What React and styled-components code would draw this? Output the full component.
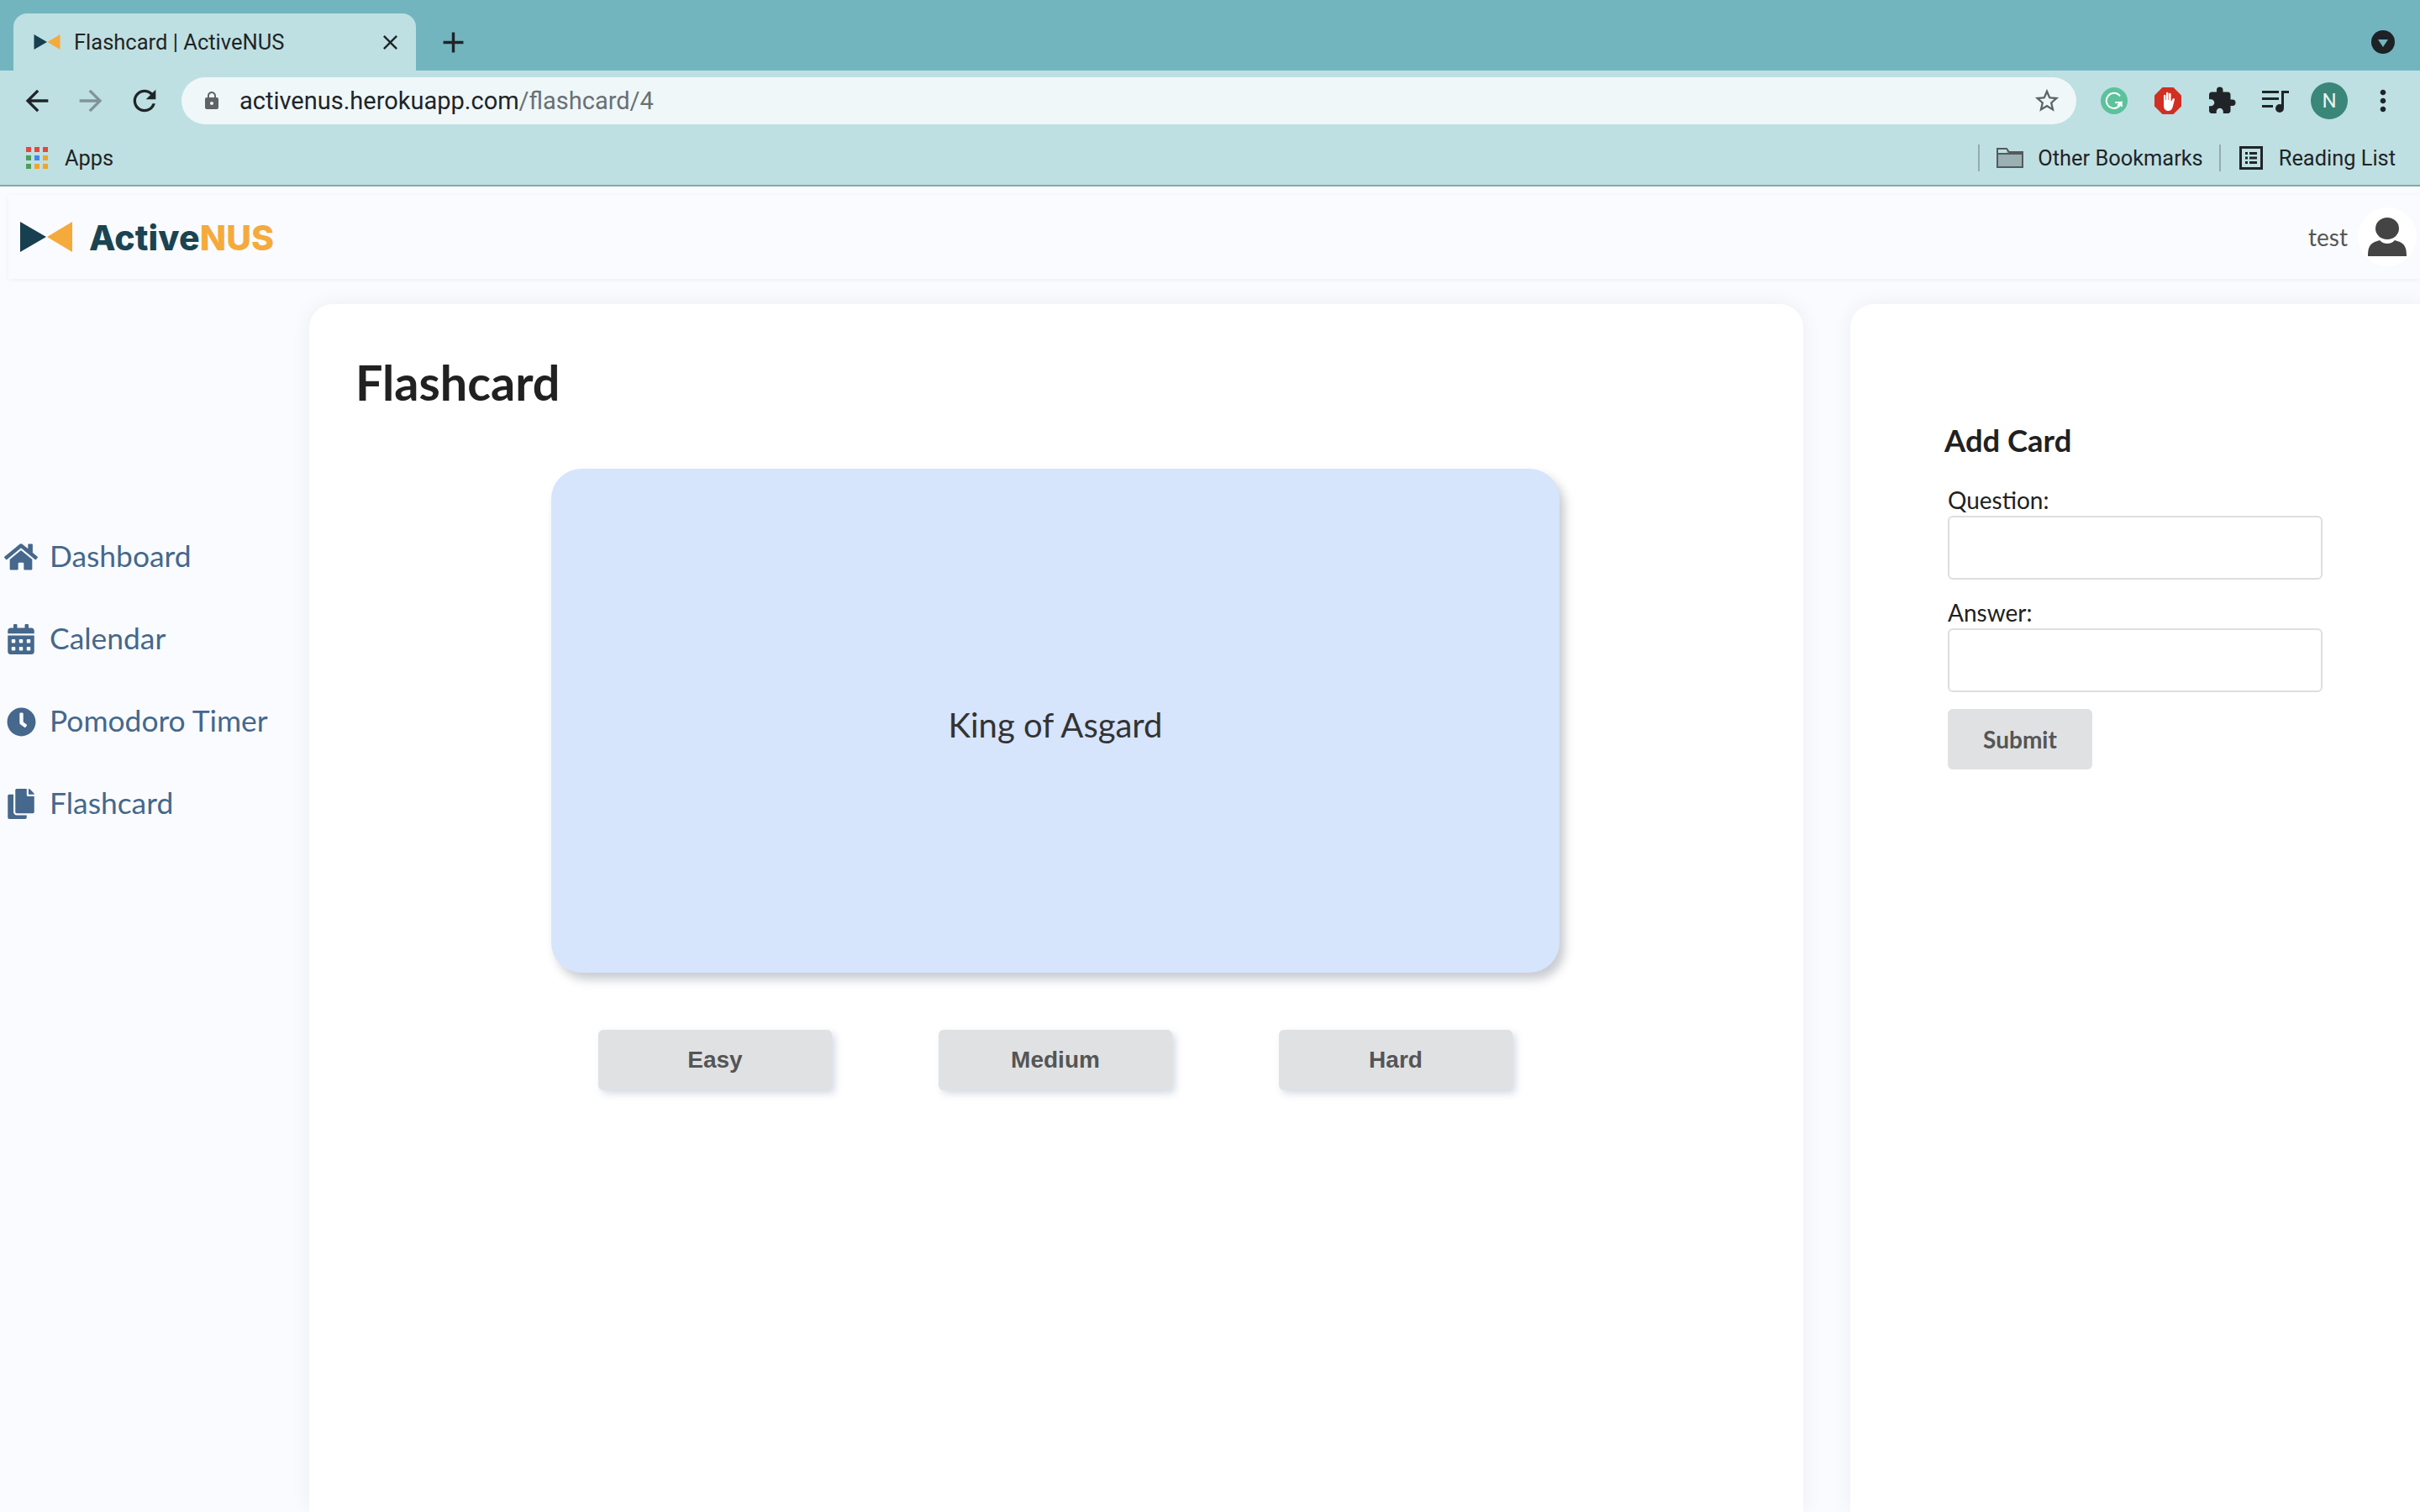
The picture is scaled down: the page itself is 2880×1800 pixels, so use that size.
import React from "react";
import styled, { createGlobalStyle } from "styled-components";
import { FaHome, FaCalendarAlt, FaClock, FaCopy } from "react-icons/fa";
import { MdArrowBack, MdArrowForward, MdRefresh, MdClose, MdAdd, MdLock, MdStarBorder, MdExtension, MdMoreVert } from "react-icons/md";

const GlobalStyle = createGlobalStyle`
  html, body {
    margin: 0;
    height: 1800px;
    overflow: hidden;
    background: #fafbff;
  }
  * {
    box-sizing: border-box;
  }
`;

const Shell = styled.div`
  width: 2880px;
  height: 1800px;
  overflow: hidden;
  display: flex;
  flex-direction: column;
`;

/* browser chrome */
const TabStrip = styled.div`
  height: 84px;
  background: #72b5bf;
  padding: 16px 30px 0 16px;
  display: flex;
  align-items: stretch;
`;

const Tab = styled.div`
  width: 479px;
  background: #bee0e2;
  border-radius: 16px 16px 0 0;
  display: flex;
  align-items: center;
  padding: 0 16px 0 24px;
  color: #202428;
  font: 400 25.5px Roboto, sans-serif;
`;

const TabTitle = styled.span`
  margin-left: 16px;
  flex: 1;
  white-space: nowrap;
`;

const NewTab = styled.div`
  width: 41px;
  margin-left: 24px;
  display: flex;
  align-items: center;
  color: #202428;
`;

const ProfileMenu = styled.div`
  width: 28px;
  height: 28px;
  margin: 20px 0 0 auto;
  border-radius: 50%;
  background: #1d2226;
  display: flex;
  align-items: center;
  justify-content: center;
  &::after {
    content: "";
    border-left: 6px solid transparent;
    border-right: 6px solid transparent;
    border-top: 9px solid #72b5bf;
    margin-top: 2px;
  }
`;

const Toolbar = styled.div`
  height: 72px;
  background: #bee0e2;
  padding: 0 12px 0 24px;
  display: flex;
  align-items: center;
`;

const NavButton = styled.div`
  width: 40px;
  margin-right: 24px;
  display: flex;
  justify-content: center;
  color: ${(p) => (p.$off ? "#7f9498" : "#202428")};
`;

const UrlPill = styled.div`
  flex: 1;
  height: 56px;
  border-radius: 28px;
  background: #eff7f8;
  display: flex;
  align-items: center;
  padding: 0 18px 0 24px;
  color: #5f6368;
`;

const UrlText = styled.div`
  flex: 1;
  margin-left: 21px;
  font: 400 29px Roboto, sans-serif;
  color: #6a7073;
`;

const Host = styled.span`
  color: #202428;
`;

const Extensions = styled.div`
  margin-left: 13px;
  display: flex;
`;

const ExtSlot = styled.div`
  width: 64px;
  height: 50px;
  display: flex;
  align-items: center;
  justify-content: center;
  color: #202428;
`;

const Avatar = styled.div`
  width: 44px;
  height: 44px;
  border-radius: 50%;
  background: #3a8678;
  color: #e8f4f2;
  display: flex;
  align-items: center;
  justify-content: center;
  font: 400 24px Roboto, sans-serif;
`;

const BookmarkBar = styled.div`
  height: 66px;
  background: #bee0e2;
  padding: 0 29px 0 31px;
  display: flex;
  align-items: center;
  font: 400 25.4px Roboto, sans-serif;
  color: #202428;
  border-bottom: 2px solid #8ba5a8;
`;

const AppsLabel = styled.span`
  margin-left: 20px;
`;

const BookmarkRight = styled.div`
  margin-left: auto;
  display: flex;
  align-items: center;
`;

const Sep = styled.div`
  width: 2px;
  height: 32px;
  background: #93abae;
  margin-right: ${(p) => p.$after}px;
`;

const BookmarkLabel = styled.span`
  margin: 0 ${(p) => p.$right}px 0 ${(p) => p.$left}px;
`;

/* app */
const TopBar = styled.header`
  height: 100px;
  margin: 10px 0 0 10px;
  background: #fafbff;
  box-shadow: 0 1px 6px rgba(0, 0, 0, 0.05);
  display: flex;
  align-items: center;
  padding: 0 4px 0 14px;
`;

const Brand = styled.div`
  margin: 2px 0 0 20px;
  font: 800 41px Inter, sans-serif;
  letter-spacing: 0.1px;
  color: #1a4452;
`;

const BrandAccent = styled.span`
  color: #f5aa3c;
`;

const UserName = styled.span`
  margin-left: auto;
  margin-right: 12px;
  font: 400 28px Lato, sans-serif;
  color: #555;
`;

const UserBubble = styled.div`
  width: 70px;
  height: 70px;
  border-radius: 50%;
  background: #fff;
  display: flex;
  align-items: center;
  justify-content: center;
`;

const Columns = styled.div`
  flex: 1;
  margin-top: 30px;
  display: grid;
  grid-template-columns: 368px 1778px 679px;
  column-gap: 0;
  font-family: Lato, sans-serif;
`;

const Sidebar = styled.nav`
  padding-top: 252px;
`;

const NavRow = styled.div`
  height: 98px;
  display: flex;
  align-items: center;
  color: #45688c;
  font-size: 35.4px;
`;

const NavIcon = styled.span`
  width: 50px;
  margin-right: 9px;
  display: flex;
  justify-content: center;
`;

const NavLabel = styled.span`
  margin-bottom: 3px;
`;

const MainCard = styled.main`
  background: #fff;
  border-radius: 28px 28px 0 0;
  box-shadow: 0 0 24px rgba(0, 0, 0, 0.06);
  padding: 58px 0 0 55px;
`;

const Title = styled.h1`
  margin: 0;
  font-size: 57.5px;
  line-height: 70px;
  font-weight: 700;
  color: #212121;
`;

const Stage = styled.div`
  width: 1776px;
  margin: 68px 0 0 -55px;
  display: flex;
  flex-direction: column;
  align-items: center;
`;

const CardFace = styled.div`
  width: 1200px;
  height: 600px;
  padding-top: 10px;
  background: #d6e4fc;
  border-radius: 36px;
  box-shadow: 6px 8px 12px rgba(60, 70, 90, 0.28);
  display: flex;
  align-items: center;
  justify-content: center;
  font-size: 40px;
  color: #333;
`;

const RatingRow = styled.div`
  width: 1088px;
  margin-top: 68px;
  display: flex;
  justify-content: space-between;
`;

const RateButton = styled.button`
  width: 278px;
  height: 72px;
  border: 0;
  border-radius: 6px;
  background: #e0e1e3;
  box-shadow: 4px 4px 8px rgba(120, 135, 170, 0.3);
  font: 700 28px "Liberation Sans", sans-serif;
  color: #555;
`;

const SideCard = styled.aside`
  margin-left: 56px;
  width: 678px;
  background: #fff;
  border-radius: 28px 0 0 0;
  box-shadow: 0 0 24px rgba(0, 0, 0, 0.06);
  padding: 140px 0 0 112px;
`;

const FormTitle = styled.h2`
  margin: 0 0 34px;
  font-size: 36.4px;
  line-height: 44px;
  font-weight: 700;
  color: #212121;
`;

const Field = styled.label`
  display: block;
  margin: 0 0 0 4px;
  font-size: 28px;
  line-height: 31px;
  padding-top: 0;
  color: #212121;
  & + & {
    margin-top: 24px;
  }
`;

const TextInput = styled.input`
  display: block;
  margin-top: 3px;
  width: 446px;
  height: 76px;
  border: 2px solid #dedede;
  border-radius: 6px;
  background: #fff;
  outline: 0;
`;

const Submit = styled.button`
  display: block;
  margin: 20px 0 0 4px;
  width: 172px;
  height: 72px;
  border: 0;
  border-radius: 6px;
  background: #e0e1e3;
  font: 700 28px Lato, sans-serif;
  color: #555;
`;

const Bowtie = ({ w, h }) => (
  <svg width={w} height={h} viewBox="0 0 62 36">
    <polygon points="0,0 31,18 0,36" fill="#183f4f" />
    <polygon points="62,0 62,36 32,18" fill="#f5aa3c" />
  </svg>
);

const AppsGrid = () => {
  const colors = ["#e8453c", "#e8453c", "#e8453c", "#4f9d5b", "#4285f4", "#eea52c", "#4f9d5b", "#eea52c", "#eea52c"];
  return (
    <svg width="26" height="26" viewBox="0 0 26 26">
      {colors.map((c, i) => (
        <rect key={i} x={(i % 3) * 10} y={Math.floor(i / 3) * 10} width="6" height="6" fill={c} />
      ))}
    </svg>
  );
};

const Grammarly = () => (
  <svg width="32" height="32" viewBox="0 0 32 32">
    <circle cx="16" cy="16" r="16" fill="#5bc29c" />
    <path d="M23 10.5A9 9 0 1 0 24.5 18H17" fill="none" stroke="#fff" strokeWidth="2" />
    <path d="M20 21.5l4.5-3.5 .5 5" fill="none" stroke="#fff" strokeWidth="2" />
  </svg>
);

const AdBlock = () => (
  <svg width="32" height="32" viewBox="0 0 32 32">
    <polygon points="9.5,0 22.5,0 32,9.5 32,22.5 22.5,32 9.5,32 0,22.5 0,9.5" fill="#d12f22" />
    <path d="M11 9.5a1.3 1.3 0 0 1 2.4 0V15h.6V6.8a1.3 1.3 0 0 1 2.5 0V15h.6V7.8a1.3 1.3 0 0 1 2.5 0V16l.6.4 1.6-3a1.3 1.3 0 0 1 2.2 1.2L21.5 24c-.9 2.5-2.6 4-5 4-3.4 0-5.5-2.5-5.5-6z" fill="#fff" />
  </svg>
);

const QueueMusic = () => (
  <svg width="32" height="28" viewBox="0 0 32 28" fill="#202428">
    <rect x="0" y="2" width="20" height="3" />
    <rect x="0" y="10" width="20" height="3" />
    <rect x="0" y="19" width="13" height="3" />
    <rect x="23" y="2" width="3" height="20" />
    <rect x="23" y="2" width="9" height="3" />
    <circle cx="21" cy="23" r="5" />
  </svg>
);

const FolderIcon = () => (
  <svg width="32" height="26" viewBox="0 0 32 26">
    <path d="M1 24V2h11l3 4h16v18z" fill="#9ab0b3" stroke="#55595c" strokeWidth="2" />
    <path d="M1 8h30" stroke="#55595c" strokeWidth="2" />
    <rect x="2" y="3" width="10" height="4" fill="#bee0e2" />
  </svg>
);

const ReadingIcon = () => (
  <svg width="28" height="28" viewBox="0 0 28 28" fill="#202428">
    <path d="M0 0h28v28H0zM3 3v22h22V3z" fillRule="evenodd" />
    <rect x="7" y="7" width="3" height="3" />
    <rect x="12" y="7" width="9" height="3" />
    <rect x="7" y="12.5" width="3" height="3" />
    <rect x="12" y="12.5" width="9" height="3" />
    <rect x="7" y="18" width="3" height="3" />
    <rect x="12" y="18" width="9" height="3" />
  </svg>
);

const PersonIcon = () => (
  <svg width="46" height="46" viewBox="0 0 46 46" fill="#444">
    <ellipse cx="23" cy="13" rx="14" ry="13" />
    <path d="M0 46C0 36 2 32 8 29L14 27C17 30 20 31 23 31S29 30 32 27L38 29C44 32 46 36 46 46Z" />
  </svg>
);

const navItems = [
  { label: "Dashboard", Icon: FaHome, size: 40 },
  { label: "Calendar", Icon: FaCalendarAlt, size: 36 },
  { label: "Pomodoro Timer", Icon: FaClock, size: 35 },
  { label: "Flashcard", Icon: FaCopy, size: 36 },
];

export default function App() {
  return (
    <Shell>
      <GlobalStyle />
      <TabStrip>
        <Tab>
          <Bowtie w={32} h={18} />
          <TabTitle>Flashcard | ActiveNUS</TabTitle>
          <MdClose size={29} />
        </Tab>
        <NewTab>
          <MdAdd size={41} />
        </NewTab>
        <ProfileMenu />
      </TabStrip>
      <Toolbar>
        <NavButton><MdArrowBack size={40} /></NavButton>
        <NavButton $off><MdArrowForward size={40} /></NavButton>
        <NavButton><MdRefresh size={40} /></NavButton>
        <UrlPill>
          <MdLock size={24} />
          <UrlText><Host>activenus.herokuapp.com</Host>/flashcard/4</UrlText>
          <MdStarBorder size={34} />
        </UrlPill>
        <Extensions>
          <ExtSlot><Grammarly /></ExtSlot>
          <ExtSlot><AdBlock /></ExtSlot>
          <ExtSlot><MdExtension size={36} /></ExtSlot>
          <ExtSlot><QueueMusic /></ExtSlot>
          <ExtSlot><Avatar>N</Avatar></ExtSlot>
          <ExtSlot><MdMoreVert size={40} /></ExtSlot>
        </Extensions>
      </Toolbar>
      <BookmarkBar>
        <AppsGrid />
        <AppsLabel>Apps</AppsLabel>
        <BookmarkRight>
          <Sep $after={20} />
          <FolderIcon />
          <BookmarkLabel $left={17} $right={19}>Other Bookmarks</BookmarkLabel>
          <Sep $after={22} />
          <ReadingIcon />
          <BookmarkLabel $left={19} $right={0}>Reading List</BookmarkLabel>
        </BookmarkRight>
      </BookmarkBar>

      <TopBar>
        <Bowtie w={62} h={36} />
        <Brand>Active<BrandAccent>NUS</BrandAccent></Brand>
        <UserName>test</UserName>
        <UserBubble><PersonIcon /></UserBubble>
      </TopBar>

      <Columns>
        <Sidebar>
          {navItems.map(({ label, Icon, size }) => (
            <NavRow key={label}>
              <NavIcon><Icon size={size} /></NavIcon>
              <NavLabel>{label}</NavLabel>
            </NavRow>
          ))}
        </Sidebar>
        <MainCard>
          <Title>Flashcard</Title>
          <Stage>
            <CardFace>King of Asgard</CardFace>
            <RatingRow>
              <RateButton>Easy</RateButton>
              <RateButton>Medium</RateButton>
              <RateButton>Hard</RateButton>
            </RatingRow>
          </Stage>
        </MainCard>
        <SideCard>
          <FormTitle>Add Card</FormTitle>
          <Field>
            Question:
            <TextInput />
          </Field>
          <Field>
            Answer:
            <TextInput />
          </Field>
          <Submit>Submit</Submit>
        </SideCard>
      </Columns>
    </Shell>
  );
}
